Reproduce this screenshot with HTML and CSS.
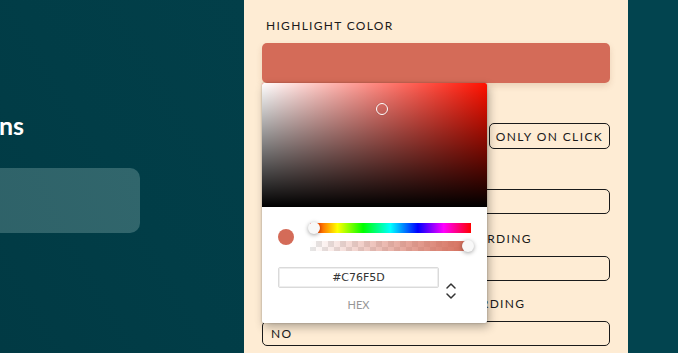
FILE: index.html
```html
<!DOCTYPE html>
<html lang="en">
<head>
  <meta charset="UTF-8" />
  <title>Options</title>
  <link rel="stylesheet" href="styles.css">
</head>
<body>

  <aside class="side">
    <div class="side-inner">
      <h1>Options</h1>
      <div class="side-card"></div>
    </div>
  </aside>

  <main class="panel">
    <div class="field">
      <label>Highlight color</label>
      <div class="swatch-wrap">
        <div class="swatch"></div>

        <div class="picker">
          <div class="sat">
            <div class="sat-white"></div>
            <div class="sat-black"></div>
            <span class="sat-cursor"></span>
          </div>
          <div class="picker-body">
            <div class="controls">
              <span class="dot"></span>
              <div class="sliders">
                <div class="hue"><span class="thumb hue-thumb"></span></div>
                <div class="alpha">
                  <div class="alpha-fill"></div>
                  <span class="thumb alpha-thumb"></span>
                </div>
              </div>
            </div>
            <div class="fields">
              <div class="hex">
                <input type="text" value="#C76F5D" />
                <span>hex</span>
              </div>
              <div class="toggle">
                <svg width="12" height="18" viewBox="0 0 12 18">
                  <path d="M2 6l4-4 4 4M2 12l4 4 4-4" fill="none" stroke="#333" stroke-width="1.5" stroke-linecap="round" stroke-linejoin="round"/>
                </svg>
              </div>
            </div>
          </div>
        </div>
      </div>
    </div>

    <div class="field">
      <label>Show tooltip</label>
      <div class="choices">
        <button>Always</button>
        <button>On hover</button>
        <button>Only on click</button>
      </div>
    </div>

    <div class="field">
      <label>Highlight shortcut</label>
      <input class="text-input" type="text" />
    </div>

    <div class="field field-gap">
      <label>Shortcut keys to start recording</label>
      <input class="text-input" type="text" />
    </div>

    <div class="field">
      <label>Shortcut keys to stop recording</label>
      <input class="text-input" type="text" value="NO" />
    </div>
  </main>

  <div class="edge"></div>

</body>
</html>
```

FILE: styles.css
```css
* {
  margin: 0;
  padding: 0;
  box-sizing: border-box;
}

body {
  display: flex;
  height: 353px;
  overflow: hidden;
  font-family: Lato, 'Open Sans', sans-serif;
  background: #013c46;
}

.side {
  width: 244px;
  flex: none;
  overflow: hidden;
  display: flex;
  justify-content: flex-end;
  padding-right: 104px;
  background: linear-gradient(60deg, #013a44 0%, #013d47 50%, #023f49 100%);
}

.side-inner {
  width: 300px;
  flex: none;
  padding-top: 108px;
}

.side-inner h1 {
  color: #fff;
  font-size: 25px;
  font-weight: 700;
  text-align: right;
  padding-right: 116px;
  line-height: 34px;
  white-space: nowrap;
}

.side-card {
  margin-top: 26px;
  height: 65px;
  border-radius: 10px;
  background: linear-gradient(70deg, #2d5f66, #31666c);
}

.panel {
  width: 384px;
  flex: none;
  background: #feecd4;
  padding: 18px 18px 0;
  display: flex;
  flex-direction: column;
  gap: 15px;
}

.field-gap {
  margin-top: 2px;
}

.field label {
  display: block;
  font-size: 12px;
  line-height: 16px;
  letter-spacing: 1.3px;
  text-transform: uppercase;
  color: #1a1a1a;
  padding-left: 4px;
  margin-bottom: 9px;
  white-space: nowrap;
}

.swatch-wrap {
  position: relative;
}

.swatch {
  height: 40px;
  border-radius: 5px;
  background: #d46b58;
  box-shadow: 0 3px 6px rgba(120, 60, 20, 0.15);
}

.choices {
  display: flex;
  justify-content: flex-end;
  gap: 8px;
}

.choices button,
.text-input {
  height: 26px;
  border: 1.5px solid #1a1a1a;
  border-radius: 5px;
  background: transparent;
  font-family: inherit;
  font-size: 12px;
  letter-spacing: 1.4px;
  color: #1a1a1a;
}

.choices button {
  flex: none;
  padding: 0 8px;
  white-space: nowrap;
  text-transform: uppercase;
}

.choices button:last-child {
  width: 121px;
  padding: 0;
}

.text-input {
  display: block;
  width: 100%;
  height: 25px;
  padding: 0 8px;
}

/* color picker popup */
.picker {
  position: absolute;
  top: 40px;
  left: 0;
  width: 225px;
  background: #fff;
  border-radius: 2px;
  box-shadow: 0 0 2px rgba(0, 0, 0, 0.3), 2px 4px 10px rgba(0, 0, 0, 0.3);
  z-index: 5;
}

.sat {
  position: relative;
  height: 124px;
  background: hsl(4deg, 100%, 50%);
  border-radius: 2px 2px 0 0;
  overflow: hidden;
}

.sat-white,
.sat-black {
  position: absolute;
  inset: 0;
}

.sat-white {
  background: linear-gradient(to right, #fff, rgba(255, 255, 255, 0));
}

.sat-black {
  background: linear-gradient(to top, #000, rgba(0, 0, 0, 0));
}

.sat-cursor {
  position: absolute;
  left: 114px;
  top: 20px;
  width: 12px;
  height: 12px;
  border-radius: 50%;
  border: 1.2px solid #fff;
  box-shadow: 0 0 1px rgba(0, 0, 0, 0.4);
}

.picker-body {
  padding: 16px 16px 12px;
}

.controls {
  display: flex;
  align-items: center;
  gap: 16px;
}

.dot {
  width: 16px;
  height: 16px;
  border-radius: 50%;
  background: #d46b58;
  flex: none;
}

.sliders {
  flex: 1;
  display: flex;
  flex-direction: column;
  gap: 8px;
}

.hue,
.alpha {
  position: relative;
  height: 10px;
}

.hue {
  background: linear-gradient(to right, #f00 0%, #ff0 17%, #0f0 33%, #0ff 50%, #00f 67%, #f0f 83%, #f00 100%);
}

.alpha {
  background-color: #fff;
  background-image:
    linear-gradient(45deg, #e6e6e6 25%, transparent 25%, transparent 75%, #e6e6e6 75%),
    linear-gradient(45deg, #e6e6e6 25%, transparent 25%, transparent 75%, #e6e6e6 75%);
  background-size: 12px 12px;
  background-position: 0 0, 6px 6px;
}

.alpha-fill {
  position: absolute;
  inset: 0;
  background: linear-gradient(to right, rgba(212, 107, 88, 0), #d46b58);
}

.thumb {
  position: absolute;
  top: -1px;
  width: 12px;
  height: 12px;
  border-radius: 50%;
  background: #f8f8f8;
  box-shadow: 0 1px 4px rgba(0, 0, 0, 0.37);
}

.hue-thumb {
  left: -2px;
}

.alpha-thumb {
  right: -3px;
}

.fields {
  display: flex;
  align-items: flex-start;
  margin-top: 16px;
}

.hex {
  width: 161px;
  text-align: center;
}

.hex input {
  display: block;
  width: 100%;
  height: 21px;
  border: 1px solid #dadada;
  border-radius: 2px;
  font-family: 'DejaVu Sans', sans-serif;
  font-size: 11px;
  color: #333;
  text-align: center;
  box-shadow: inset 0 0 0 1px #eee;
}

.hex span {
  display: block;
  margin-top: 10px;
  font-size: 11px;
  color: #969696;
  text-transform: uppercase;
}

.toggle {
  margin-left: 6px;
  margin-top: 15px;
  width: 12px;
  display: flex;
}

.edge {
  flex: 1;
  background: #02444f;
}
```
